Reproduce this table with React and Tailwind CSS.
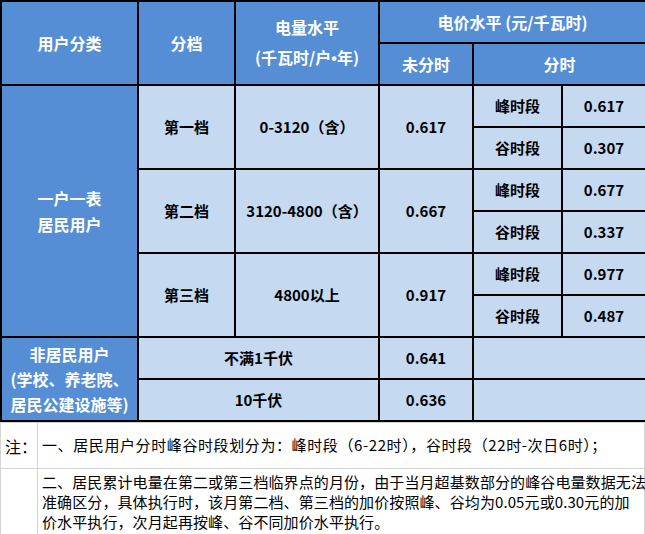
import React from "react";

// 居民/非居民电价表：Excel 风格的合并单元格表格
const TIERS = [
  { name: "第一档", range: "0-3120（含）", flat: "0.617", peak: "0.617", valley: "0.307" },
  { name: "第二档", range: "3120-4800（含）", flat: "0.667", peak: "0.677", valley: "0.337" },
  { name: "第三档", range: "4800以上", flat: "0.917", peak: "0.977", valley: "0.487" },
];

const head = "border-2 border-black bg-[#558ed5] text-white font-bold text-[16px] text-center align-middle";
const cell = "border-2 border-black bg-[#c5d9f1] text-black font-bold text-[15px] text-center align-middle";
const note = "border border-[#d4d4d4] bg-white text-black text-[15px] align-middle whitespace-nowrap";

export default function App() {
  return (
    <div
      className="w-[645px] h-[534px] overflow-hidden bg-white"
      style={{ fontFamily: '"Noto Sans CJK SC", "Noto Sans", sans-serif' }}
    >
      <table className="border-collapse table-fixed w-[645px]">
        <colgroup>
          <col className="w-[137px]" />
          <col className="w-[97px]" />
          <col className="w-[144px]" />
          <col className="w-[94px]" />
          <col className="w-[89px]" />
          <col className="w-[84px]" />
        </colgroup>
        <tbody>
          <tr className="h-[42px]">
            <td rowSpan={2} className={head}>用户分类</td>
            <td rowSpan={2} className={head}>分档</td>
            <td rowSpan={2} className={`${head} leading-[30px]`}>
              电量水平
              <br />
              (千瓦时/户<span className="font-['Liberation_Sans']">•</span>年)
            </td>
            <td colSpan={3} className={head}>电价水平 (元/千瓦时)</td>
          </tr>
          <tr className="h-[42px]">
            <td className={head}>未分时</td>
            <td colSpan={2} className={head}>分时</td>
          </tr>
          {TIERS.map((t, i) => (
            <React.Fragment key={t.name}>
              <tr className="h-[42px]">
                {i === 0 && (
                  <td rowSpan={6} className={`${head} leading-[26px]`}>
                    一户一表
                    <br />
                    居民用户
                  </td>
                )}
                <td rowSpan={2} className={cell}>{t.name}</td>
                <td rowSpan={2} className={cell}>{t.range}</td>
                <td rowSpan={2} className={cell}>{t.flat}</td>
                <td className={cell}>峰时段</td>
                <td className={cell}>{t.peak}</td>
              </tr>
              <tr className="h-[42px]">
                <td className={cell}>谷时段</td>
                <td className={cell}>{t.valley}</td>
              </tr>
            </React.Fragment>
          ))}
          <tr className="h-[42px]">
            <td rowSpan={2} className={`${head} leading-[25px]`}>
              非居民用户
              <br />
              (学校、养老院、
              <br />
              居民公建设施等)
            </td>
            <td colSpan={2} className={cell}>不满1千伏</td>
            <td className={cell}>0.641</td>
            <td colSpan={2} className={cell}></td>
          </tr>
          <tr className="h-[42px]">
            <td colSpan={2} className={cell}>10千伏</td>
            <td className={cell}>0.636</td>
            <td colSpan={2} className={cell}></td>
          </tr>
        </tbody>
      </table>
      <table className="border-collapse table-fixed w-[645px]">
        <colgroup>
          <col className="w-[37px]" />
          <col />
        </colgroup>
        <tbody>
          <tr className="h-[46px]">
            <td className={`${note} pl-[4px] text-[16px]`}>注：</td>
            <td className={`${note} pl-[4px] tracking-[0.6px]`}>
              一、居民用户分时峰谷时段划分为：峰时段（6-22时），谷时段（22时-次日6时）；
            </td>
          </tr>
          <tr className="h-[70px]">
            <td className={note}></td>
            <td className={`${note} pl-[4px] pb-[4px] leading-[20px] text-[14.6px] tracking-[0.1px]`}>
              二、居民累计电量在第二或第三档临界点的月份，由于当月超基数部分的峰谷电量数据无法
              <br />
              准确区分，具体执行时，该月第二档、第三档的加价按照峰、谷均为0.05元或0.30元的加
              <br />
              价水平执行，次月起再按峰、谷不同加价水平执行。
            </td>
          </tr>
        </tbody>
      </table>
    </div>
  );
}
